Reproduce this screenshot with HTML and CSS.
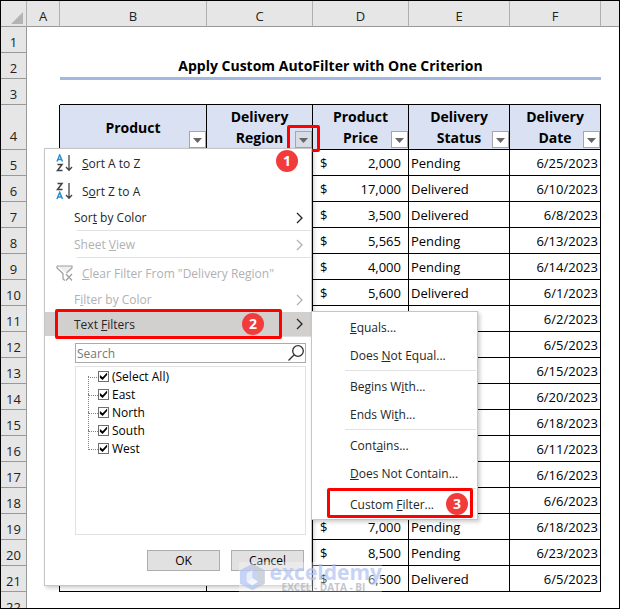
FILE: index.html
```
<!DOCTYPE html>
<html lang="en">
<head>
  <meta charset="UTF-8">
  <meta name="viewport" content="width=device-width, initial-scale=1.0">
  <title>Apply Custom AutoFilter with One Criterion</title>
  <link rel="stylesheet" href="styles.css">
</head>
<body>
  <div class="window">
    <table class="sheet">
      <colgroup>
        <col class="col-num">
        <col class="col-a">
        <col class="col-b">
        <col class="col-c">
        <col class="col-d">
        <col class="col-e">
        <col class="col-f">
        <col>
      </colgroup>
      <thead>
        <tr>
          <th class="corner"><svg width="12" height="12" viewBox="0 0 12 12"><path d="M12 0V12H0Z" fill="#b4b4b4"/></svg></th>
          <th>A</th><th>B</th><th>C</th><th>D</th><th>E</th><th>F</th><th></th>
        </tr>
      </thead>
      <tbody id="rows">
        <tr><th>1</th><td colspan="7"></td></tr>
        <tr><th>2</th><td></td><td class="title" colspan="5">Apply Custom AutoFilter with One Criterion</td><td></td></tr>
        <tr><th>3</th><td></td><td class="line"></td><td class="line"></td><td class="line"></td><td class="line"></td><td class="line"></td><td></td></tr>
        <tr class="heads">
          <th>4</th>
          <td class="edge"></td>
          <td class="head">Product<button class="drop" aria-label="Filter Product"></button></td>
          <td class="head">Delivery<br>Region<button class="drop active" aria-label="Filter Delivery Region"></button></td>
          <td class="head">Product<br>Price<button class="drop" aria-label="Filter Product Price"></button></td>
          <td class="head">Delivery<br>Status<button class="drop" aria-label="Filter Delivery Status"></button></td>
          <td class="head">Delivery<br>Date<button class="drop" aria-label="Filter Delivery Date"></button></td>
          <td></td>
        </tr>
      </tbody>
    </table>

    <div class="mark region-mark"></div>

    <div class="menu">
      <button class="item tall">
        <svg class="icon" width="18" height="18" viewBox="0 0 18 18" fill="none">
          <path d="M1 7.500L3.700 1L6.500 7.500M2 5.500H5.500" stroke="#2b8fcf" stroke-width="1.500"/>
          <path d="M1.500 10.500H6L1.500 16.500H6.500" stroke="#444" stroke-width="1.500"/>
          <path d="M13 1V16M10 13L13 16.300L16 13" stroke="#444" stroke-width="1.300"/>
        </svg>
        <span><u>S</u>ort A to Z</span>
      </button>
      <button class="item tall">
        <svg class="icon" width="18" height="18" viewBox="0 0 18 18" fill="none">
          <path d="M1.500 1.500H6L1.500 7.500H6.500" stroke="#444" stroke-width="1.500"/>
          <path d="M1 17L3.700 10.500L6.500 17M2 15H5.500" stroke="#2b8fcf" stroke-width="1.500"/>
          <path d="M13 1V16M10 13L13 16.300L16 13" stroke="#444" stroke-width="1.300"/>
        </svg>
        <span>S<u>o</u>rt Z to A</span>
      </button>
      <button class="item"><span>Sor<u>t</u> by Color</span><svg class="more" width="8" height="12" viewBox="0 0 8 12"><path d="M1 1L6 6L1 11"/></svg></button>
      <hr>
      <button class="item" disabled><span>Sheet <u>V</u>iew</span><svg class="more" width="8" height="12" viewBox="0 0 8 12"><path d="M1 1L6 6L1 11"/></svg></button>
      <hr>
      <button class="item tall" disabled>
        <svg class="icon" width="18" height="18" viewBox="0 0 18 18" fill="none" stroke="#a0a0a0">
          <path d="M1 2H16V4L10.500 9M1 2V4L7 9.500V15L9 16.500" stroke-width="1.200" fill="#eee"/>
          <path d="M10 10L16 16.500M16 10L10 16.500" stroke-width="1.300"/>
        </svg>
        <span><u>C</u>lear Filter From "Delivery Region"</span>
      </button>
      <button class="item" disabled><span>F<u>i</u>lter by Color</span><svg class="more" width="8" height="12" viewBox="0 0 8 12"><path d="M1 1L6 6L1 11"/></svg></button>
      <button class="item selected"><span>Text <u>F</u>ilters</span><svg class="more" width="8" height="12" viewBox="0 0 8 12"><path d="M1 1L6 6L1 11"/></svg></button>
      <hr>
      <div class="search">
        <input type="text" placeholder="Search" aria-label="Search">
        <svg width="18" height="18" viewBox="0 0 18 18" fill="none" stroke="#333" stroke-width="1.300"><circle cx="11" cy="7" r="5.300"/><path d="M7.200 10.800L1.500 16.500"/></svg>
      </div>
      <div class="values">
        <label><input type="checkbox" checked>(Select All)</label>
        <label><input type="checkbox" checked>East</label>
        <label><input type="checkbox" checked>North</label>
        <label><input type="checkbox" checked>South</label>
        <label><input type="checkbox" checked>West</label>
      </div>
      <div class="buttons">
        <button>OK</button>
        <button>Cancel</button>
      </div>
    </div>

    <div class="menu submenu">
      <button class="item tall"><span><u>E</u>quals...</span></button>
      <button class="item tall"><span>Does <u>N</u>ot Equal...</span></button>
      <hr>
      <button class="item tall"><span>Begins W<u>i</u>th...</span></button>
      <button class="item tall"><span>Ends Wi<u>t</u>h...</span></button>
      <hr>
      <button class="item tall"><span>Cont<u>a</u>ins...</span></button>
      <button class="item tall"><span><u>D</u>oes Not Contain...</span></button>
      <hr>
      <button class="item tall"><span>Custom <u>F</u>ilter...</span></button>
    </div>

    <div class="mark text-mark"></div>
    <div class="mark custom-mark"></div>
    <span class="step step-1">1</span>
    <span class="step step-2">2</span>
    <span class="step step-3">3</span>

    <div class="watermark">
      <svg width="28" height="30" viewBox="0 0 28 30">
        <path d="M14 1L27 8V22L14 29L1 22V8Z" fill="#b9c9f3"/>
        <path d="M14 1L27 8V22L14 29L20 24V11L14 8Z" fill="#c3c8d2"/>
        <path d="M8 11L14 8V16L8 20Z" fill="#e4e9f8"/>
        <path d="M8 20L14 16L20 20L14 24Z" fill="#f4f6fd"/>
      </svg>
      <div>
        <div class="brand">exceldemy</div>
        <div class="tagline">EXCEL - DATA - BI</div>
      </div>
    </div>
  </div>

  <script>
    const data = [
      ['2,000', 'Pending', '6/25/2023'],
      ['17,000', 'Delivered', '6/10/2023'],
      ['3,500', 'Delivered', '6/8/2023'],
      ['5,565', 'Pending', '6/13/2023'],
      ['4,000', 'Pending', '6/14/2023'],
      ['5,600', 'Delivered', '6/1/2023'],
      ['', '', '6/2/2023'],
      ['', '', '6/5/2023'],
      ['', '', '6/15/2023'],
      ['', '', '6/20/2023'],
      ['', '', '6/18/2023'],
      ['', '', '6/11/2023'],
      ['', '', '6/16/2023'],
      ['', '', '6/6/2023'],
      ['7,000', 'Pending', '6/18/2023'],
      ['8,500', 'Pending', '6/23/2023'],
      ['6,500', 'Delivered', '6/5/2023']
    ];

    const rows = document.getElementById('rows');
    data.forEach(([price, status, date], i) => {
      const row = document.createElement('tr');
      row.innerHTML = `
        <th>${i + 5}</th>
        <td class="edge"></td>
        <td class="cell"></td>
        <td class="cell"></td>
        <td class="cell"><div class="price">${price ? `<span>$</span><span>${price}</span>` : ''}</div></td>
        <td class="cell">${status}</td>
        <td class="cell date">${date}</td>
        <td></td>
      `;
      rows.appendChild(row);
    });

    const last = document.createElement('tr');
    last.innerHTML = '<th>22</th><td colspan="7"></td>';
    rows.appendChild(last);
  </script>
</body>
</html>
```
FILE: styles.css
```
* {
  box-sizing: border-box;
}
body {
  margin: 0;
  font-family: "Open Sans", sans-serif;
  font-size: 13px;
  color: #000;
  background: #fff;
}
button, input {
  font: inherit;
  color: inherit;
}
.window {
  position: relative;
  height: 100vh;
  overflow: hidden;
  border: 1px solid #000;
}

/* worksheet */
.sheet {
  width: 100%;
  table-layout: fixed;
  border-spacing: 0;
}
.col-num { width: 26px; }
.col-a { width: 33px; }
.col-b { width: 147px; }
.col-c { width: 106px; }
.col-d { width: 96px; }
.col-e { width: 101px; }
.col-f { width: 91px; }
.sheet th, .sheet td {
  height: 26px;
  padding: 0;
  line-height: 20px;
}
.sheet th {
  padding-top: 4px;
  background: #e6e6e6;
  border-right: 1px solid #999;
  border-bottom: 1px solid #999;
  font-size: 13px;
  font-weight: normal;
  color: #222;
}
.sheet thead th {
  border-right-color: #b0b0b0;
}
.sheet thead th:last-child {
  border-right: 0;
}
.sheet .corner svg {
  display: block;
  margin: 4px 3px 0 auto;
}
.sheet .title {
  padding-top: 2px;
  font-size: 14px;
  font-weight: bold;
  text-align: center;
  border-bottom: 2px solid #a2b8e1;
  box-shadow: 0 1px #a2b8e1;
}
.sheet .line {
  border-bottom: 1px solid #000;
}
.sheet .edge {
  border-right: 1px solid #000;
}
.sheet .heads th {
  height: 45px;
  padding-top: 18px;
}
.sheet .head {
  position: relative;
  background: #d9e1f2;
  border-right: 1px solid #000;
  border-bottom: 1px solid #000;
  font-size: 14px;
  font-weight: bold;
  line-height: 21px;
  text-align: center;
}
.drop {
  position: absolute;
  right: 0;
  bottom: 1px;
  width: 17px;
  height: 17px;
  padding: 0;
  border: 1px solid #a6a6a6;
  background: #fff;
}
.drop::before {
  content: "";
  display: block;
  margin: 2px auto 0;
  width: 9px;
  height: 5px;
  background: #666;
  clip-path: polygon(0 0, 100% 0, 50% 100%);
}
.drop.active {
  background: #d8dce4;
}
.sheet .cell {
  padding: 0 2px;
  border-right: 1px solid #000;
  border-bottom: 1px solid #000;
}
.price {
  display: flex;
  justify-content: space-between;
  padding: 0 5px;
}
.sheet .date {
  text-align: right;
}

/* filter menus */
.menu {
  position: absolute;
  top: 147px;
  left: 43px;
  width: 268px;
  padding-bottom: 14px;
  background: #fff;
  border: 1px solid #c6c6c6;
  box-shadow: 2px 2px 4px rgba(0, 0, 0, 0.2);
  font-size: 12px;
}
.menu hr {
  margin: 0 0 1px 32px;
  border: 0;
  border-top: 1px solid #e1e1e1;
}
.item {
  display: flex;
  align-items: center;
  width: 100%;
  height: 25px;
  padding: 0 7px 0 29px;
  border: 0;
  background: none;
  color: #262626;
  text-align: left;
}
.item:disabled {
  color: #b1b1b1;
}
.item.tall {
  height: 28px;
  padding-left: 11px;
}
.item.selected {
  height: 24px;
  background: #d2d0ce;
}
.icon {
  margin-right: 8px;
}
.more {
  margin-left: auto;
  fill: none;
  stroke: currentColor;
  stroke-width: 1.3;
}
.search {
  display: flex;
  align-items: center;
  height: 20px;
  margin: 6px 5px 3px 30px;
  border: 1px solid #ababab;
}
.search input {
  flex: 1;
  min-width: 0;
  height: 18px;
  padding: 0 1px;
  border: 0;
  outline: 0;
  background: none;
}
.search input::placeholder {
  color: #767676;
}
.values {
  height: 169px;
  margin: 0 5px 15px 30px;
  border: 1px solid #e1e1e1;
}
.values label {
  position: relative;
  display: flex;
  align-items: center;
  gap: 3px;
  height: 18px;
  padding-left: 22px;
}
.values label::before {
  content: "";
  position: absolute;
  left: 12px;
  top: -9px;
  width: 9px;
  height: 19px;
  border-left: 1px dotted #808080;
  border-bottom: 1px dotted #808080;
}
.values label:first-child::before {
  top: 9px;
  height: 1px;
  border-left: 0;
}
.values input {
  appearance: none;
  width: 11px;
  height: 11px;
  margin: 0;
  border: 1px solid #707070;
}
.values input:checked::before {
  content: "";
  display: block;
  width: 9px;
  height: 9px;
  background: #000;
  clip-path: polygon(10% 40%, 40% 65%, 90% 10%, 90% 40%, 40% 95%, 10% 70%);
}
.buttons {
  display: flex;
  justify-content: flex-end;
  gap: 11px;
  padding-right: 7px;
}
.buttons button {
  width: 73px;
  height: 21px;
  padding: 0;
  border: 1px solid #adadad;
  background: #e1e1e1;
}
.submenu {
  top: 310px;
  left: 310px;
  width: 167px;
  padding: 1px 0;
}
.submenu .item.tall {
  padding-left: 38px;
}
.submenu hr {
  margin: 1px 1px 1px 33px;
}

/* step highlights */
.mark {
  position: absolute;
  border: 3px solid #f00;
  border-radius: 2px;
}
.region-mark {
  top: 124px;
  left: 286px;
  width: 33px;
  height: 27px;
}
.text-mark {
  top: 308px;
  left: 54px;
  width: 227px;
  height: 30px;
}
.custom-mark {
  top: 487px;
  left: 326px;
  width: 146px;
  height: 30px;
}
.step {
  position: absolute;
  width: 22px;
  height: 22px;
  border-radius: 50%;
  background: #f23c3c;
  color: #fff;
  font-size: 14px;
  font-weight: bold;
  line-height: 22px;
  text-align: center;
}
.step-1 { top: 149px; left: 275px; }
.step-2 { top: 312px; left: 241px; }
.step-3 { top: 492px; left: 445px; }

.watermark {
  position: absolute;
  top: 561px;
  left: 238px;
  display: flex;
  gap: 4px;
  width: 143px;
  height: 30px;
  background: rgba(255, 255, 255, 0.4);
  opacity: 0.8;
}
.brand {
  color: #b9c9f3;
  font-size: 21px;
  font-weight: bold;
  line-height: 20px;
}
.tagline {
  padding-left: 12px;
  color: #b4b8c0;
  font-size: 10px;
  font-weight: bold;
  line-height: 10px;
  white-space: nowrap;
}
```
